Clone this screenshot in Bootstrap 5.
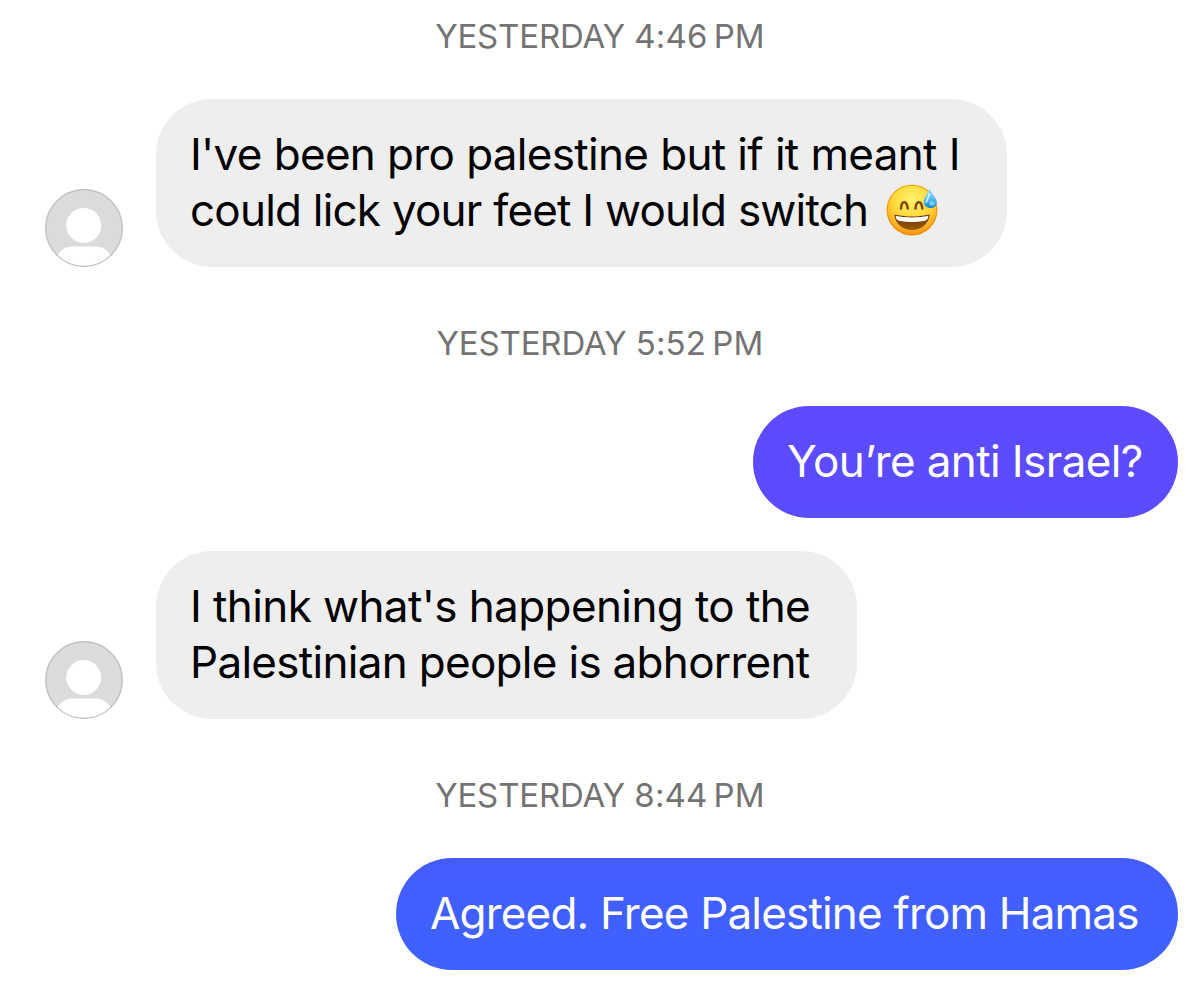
<!DOCTYPE html>
<html lang="en">
<head>
    <meta charset="UTF-8">
    <meta name="viewport" content="width=device-width, initial-scale=1.0">
    <title>Messages</title>
    <link rel="stylesheet" href="https://cdn.jsdelivr.net/npm/bootstrap@5.3.0/dist/css/bootstrap.min.css">
    <style>
        body {
            background-color: #fff;
            font-family: Inter, "Liberation Sans", sans-serif;
        }
        .chat {
            height: 1001px;
            overflow: hidden;
            padding: 16px 22px 0 45px;
        }
        .stamp {
            height: 40px;
            line-height: 40px;
            font-size: 33px;
            color: #737373;
            margin-right: 23px;
            white-space: nowrap;
        }
        .day { letter-spacing: -0.15px; }
        .time { letter-spacing: 0.15px; }
        .avatar {
            width: 78px;
            height: 78px;
            margin-right: 33px;
        }
        .bubble {
            padding: 27px 34px 29px;
            border-radius: 56px;
            font-size: 44px;
            line-height: 56px;
            white-space: nowrap;
        }
        .received {
            background-color: #eee;
            color: #000;
            height: 168px;
        }
        .sent {
            color: #fff;
            height: 112px;
        }
        .wide { width: 851px; }
        .medium { width: 701px; }
        .purple {
            width: 425px;
            background-image: linear-gradient(#5e4aff, #5a4cff);
        }
        .blue {
            width: 782px;
            background-image: linear-gradient(#445cff, #3e62ff);
        }
        .after-stamp { margin-top: 43px; }
        .before-stamp { margin-bottom: 56px; }
        .after-sent { margin-top: 33px; }
        .emoji {
            width: 52px;
            height: 52px;
            margin-left: 18px;
        }
        .l1 { letter-spacing: -0.7px; word-spacing: 0.3px; }
        .l2 { letter-spacing: -0.8px; word-spacing: 0.1px; }
        .l3 { letter-spacing: -0.6px; }
        .l4 { letter-spacing: -0.6px; }
        .l5 { letter-spacing: -0.7px; }
        .l6 { letter-spacing: -0.81px; }
    </style>
</head>
<body>
    <svg class="d-none">
        <symbol id="person" viewBox="0 0 78 78">
            <clipPath id="disc"><circle cx="39" cy="39" r="38"/></clipPath>
            <circle cx="39" cy="39" r="38.5" fill="#dbdbdb"/>
            <circle cx="38.7" cy="36.5" r="17.5" fill="#fff"/>
            <path d="M10 70C15 61 20 57.5 27 57.5H51C58 57.5 63 61 68 70V78H10Z" fill="#fff" clip-path="url(#disc)"/>
            <circle cx="39" cy="39" r="38.3" fill="none" stroke="#bcbcbc" stroke-width="1.2"/>
        </symbol>
    </svg>

    <main class="chat d-flex flex-column">
        <div class="stamp text-center"><span class="day">YESTERDAY</span> <span class="time">4:46&#8239;PM</span></div>

        <div class="d-flex align-items-end after-stamp before-stamp">
            <svg class="avatar flex-shrink-0"><use href="#person"/></svg>
            <div class="bubble received wide">
                <div><span class="l1">I've been pro palestine but if it meant I</span></div>
                <div class="d-flex align-items-center">
                    <span class="l2">could lick your feet I would switch</span>
                    <svg class="emoji" viewBox="0 0 52 52" role="img" aria-label="Grinning face with sweat">
                        <defs>
                            <radialGradient id="face" cx=".5" cy=".3" r=".72">
                                <stop offset="0" stop-color="#fff36a"/>
                                <stop offset=".5" stop-color="#ffda3c"/>
                                <stop offset=".82" stop-color="#fbae20"/>
                                <stop offset="1" stop-color="#e98508"/>
                            </radialGradient>
                            <linearGradient id="mouth" x2="0" y2="1">
                                <stop offset="0" stop-color="#6a3006"/>
                                <stop offset="1" stop-color="#9a5a08"/>
                            </linearGradient>
                            <linearGradient id="drop" x2="0" y2="1">
                                <stop offset="0" stop-color="#a8e2fa"/>
                                <stop offset=".5" stop-color="#5cc2f2"/>
                                <stop offset="1" stop-color="#1583d2"/>
                            </linearGradient>
                        </defs>
                        <circle cx="26" cy="26" r="25.4" fill="url(#face)"/>
                        <circle cx="26" cy="26" r="24.8" fill="none" stroke="#e88d12" stroke-width="1.1" opacity=".75"/>
                        <path d="M15 24.5C15.5 16 21 16 21.7 24.5M29.5 24.5C30 16 35.7 16 36.3 24.5" fill="none" stroke="#81450b" stroke-width="2.5" stroke-linecap="round"/>
                        <path d="M8.5 32C8 30.8 9 30.5 10 30.8C20 33.2 32 33.2 42 30.8C43 30.5 44 30.8 43.6 32C41.5 40.8 35 46 26 46S10.5 40.8 8.5 32Z" fill="url(#mouth)"/>
                        <path d="M9.6 31.8C20 34 32 34 42.4 31.8C42 35.5 40.5 36.5 38 37C30 38.3 22 38.3 14 37C11.5 36.5 10 35.5 9.6 31.8Z" fill="#fff"/>
                        <path d="M43.6 4C45 9.5 51 13.5 50.8 18.5C50.5 22.5 47.6 24.2 44.5 24C40.7 23.8 37.5 21.5 37.8 17.4C38 13 42.4 9 43.6 4Z" fill="url(#drop)"/>
                        <path d="M43 10C43.4 13 41 15 40.3 18" fill="none" stroke="#e6faff" stroke-width="1.8" stroke-linecap="round" opacity=".8"/>
                        <ellipse cx="46" cy="19.5" rx="2.8" ry="2.2" fill="#9ee3ff" opacity=".65"/>
                    </svg>
                </div>
            </div>
        </div>

        <div class="stamp text-center"><span class="day">YESTERDAY</span> <span class="time">5:52&#8239;PM</span></div>

        <div class="d-flex justify-content-end after-stamp">
            <div class="bubble sent purple"><span class="l3">You’re anti Israel?</span></div>
        </div>

        <div class="d-flex align-items-end after-sent before-stamp">
            <svg class="avatar flex-shrink-0"><use href="#person"/></svg>
            <div class="bubble received medium">
                <div><span class="l4">I think what's happening to the</span></div>
                <div><span class="l5">Palestinian people is abhorrent</span></div>
            </div>
        </div>

        <div class="stamp text-center"><span class="day">YESTERDAY</span> <span class="time">8:44&#8239;PM</span></div>

        <div class="d-flex justify-content-end after-stamp">
            <div class="bubble sent blue"><span class="l6">Agreed. Free Palestine from Hamas</span></div>
        </div>
    </main>

    <script src="https://cdn.jsdelivr.net/npm/bootstrap@5.3.0/dist/js/bootstrap.bundle.min.js"></script>
</body>
</html>
